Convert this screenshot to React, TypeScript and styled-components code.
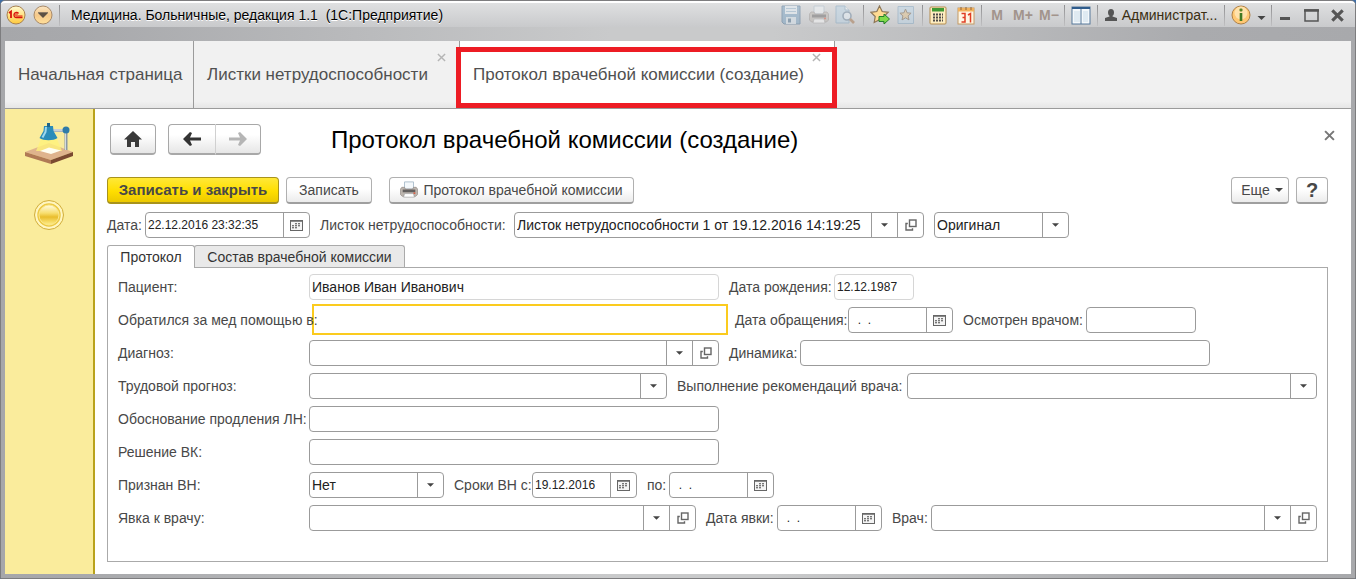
import React from "react";
import styled, { createGlobalStyle, css } from "styled-components";

const ink = "#484848";
const line = "#9b9b9b";

const GlobalStyle = createGlobalStyle`
  *, *::before, *::after { box-sizing: border-box; }
  body {
    margin: 0;
    background: #3f6ea5;
    color: ${ink};
    font-family: "Liberation Sans", Arial, sans-serif;
    font-size: 14px;
    line-height: 16px;
  }
  button, input, select { font: inherit; color: inherit; margin: 0; }
  button { cursor: pointer; }
  svg { display: block; flex: none; }
`;

/* ---------- window frame ---------- */

const Window = styled.div`
  display: flex;
  flex-direction: column;
  min-height: 100vh;
  padding: 0 4px 4px;
  border: 1px solid #7d7d7f;
  border-radius: 5px 5px 0 0;
  background: linear-gradient(90deg, #a6a7aa 0, #a8a9ac 6%, #c9cacb 45%, #c9cacb 57%, #aaabae 88%, #a8a9ac 100%);
`;

const TitleBar = styled.header`
  display: flex;
  align-items: center;
  height: 26px;
  margin: 0 -4px;
  padding: 0 5px 0 5px;
  border-radius: 4px 4px 0 0;
  border-top: 2px solid #fff;
  background: linear-gradient(#dfe0e1, #c9cacc);
  color: #000;
`;

const Separator = styled.span`
  width: 1px;
  height: 21px;
  margin: 0 6px;
  background: linear-gradient(#8f8f91, #c0c0c2);
  flex: none;
`;

const LeadSeparator = styled(Separator)`
  margin: 0;
`;

const Gap = styled.span<{ $w?: number }>`
  width: ${(p) => p.$w ?? 3}px;
  flex: none;
`;

const AppTitle = styled.h1`
  flex: 1;
  margin: 0 0 0 5px;
  font-size: 14px;
  font-weight: 400;
  line-height: 16px;
  white-space: nowrap;
  text-shadow: 0 1px 0 #fff;
`;

const BarButton = styled.button<{ $w?: number; $faded?: boolean }>`
  display: flex;
  align-items: center;
  justify-content: center;
  gap: 5px;
  width: ${(p) => (p.$w ? `${p.$w}px` : "auto")};
  height: 22px;
  padding: 0;
  border: 0;
  background: none;
  color: #555;
  white-space: nowrap;
  opacity: ${(p) => (p.$faded ? 0.45 : 1)};
`;

const MemoryButton = styled(BarButton)`
  color: #a2948c;
  font-weight: 700;
`;

const UserButton = styled(BarButton)`
  color: #3b2f12;
`;

const LowCaret = styled.span`
  padding-top: 6px;
`;

const Group = styled.div`
  display: flex;
  align-items: center;
`;

/* ---------- open pages ---------- */

const PageTabs = styled.nav`
  display: flex;
  height: 68px;
  margin-top: 14px;
  border-bottom: 1px solid #9b9b9b;
  background: linear-gradient(#f1f1f1 90%, #e6e6e6);
`;

const PageTab = styled.div<{ $w: number; $active?: boolean }>`
  position: relative;
  display: flex;
  align-items: center;
  width: ${(p) => p.$w}px;
  padding-left: 13px;
  border-right: 1px solid #9b9b9b;
  ${(p) => p.$active && css`background: #fff;`}
`;

const PageLink = styled.a`
  color: #505050;
  font-size: 17px;
  line-height: 20px;
  text-decoration: none;
  white-space: nowrap;
`;

const TabClose = styled.button`
  position: absolute;
  top: 12px;
  right: 13px;
  padding: 0;
  border: 0;
  background: none;
  color: #b5b5b5;
`;

const Highlight = styled.span`
  position: absolute;
  inset: 6px -3px 0 -4px;
  border: 5px solid #ed1c24;
  pointer-events: none;
`;

const Body = styled.div`
  display: flex;
  flex: 1;
  background: #fff;
`;

const Sections = styled.aside`
  display: flex;
  flex-direction: column;
  align-items: center;
  gap: 34px;
  width: 90px;
  padding-top: 14px;
  border-right: 2px solid #b9a21c;
  background: #faec9c;
  flex: none;
`;

const SectionButton = styled.button`
  padding: 0;
  border: 0;
  background: none;
`;

/* ---------- form ---------- */

const Form = styled.main`
  flex: 1;
  min-width: 0;
  padding: 15px 23px 12px 12px;
`;

const Row = styled.div<{ $gap?: number }>`
  display: flex;
  align-items: center;
  gap: ${(p) => p.$gap ?? 10}px;
`;

const HeadRow = styled(Row)`
  padding: 0 0 0 3px;
`;

const FormTitle = styled.h2`
  flex: 1;
  margin: 0 0 0 58px;
  color: #000;
  font-size: 24px;
  font-weight: 400;
  line-height: 30px;
  white-space: nowrap;
`;

const raised = css`
  border: 1px solid #b0b0b0;
  border-bottom: 2px solid #9f9f9f;
  border-radius: 4px;
  background: linear-gradient(#fff 45%, #ebebeb);
`;

const NavButton = styled.button`
  display: flex;
  align-items: center;
  justify-content: center;
  width: 46px;
  height: 31px;
  padding: 0;
  border: 1px solid #a8a8a8;
  border-bottom-width: 2px;
  border-radius: 4px;
  background: linear-gradient(#fff 35%, #e6e6e6);
`;

const NavPair = styled.div`
  display: flex;
  ${NavButton}:first-child { width: 47px; border-right: 0; border-radius: 4px 0 0 4px; }
  ${NavButton}:last-child { border-left: 1px solid #d0d0d0; border-radius: 0 4px 4px 0; }
`;

const CloseForm = styled.button`
  align-self: flex-start;
  margin: 6px -7px 0 0;
  padding: 0;
  border: 0;
  background: none;
  color: #777;
`;

const Commands = styled(Row)`
  margin-top: 22px;
`;

const Command = styled.button<{ $w: number; $primary?: boolean }>`
  display: flex;
  align-items: center;
  justify-content: center;
  gap: 5px;
  width: ${(p) => p.$w}px;
  height: 27px;
  padding: 0;
  white-space: nowrap;
  ${raised}
  ${(p) => p.$primary && css`
    border-color: #a8931c;
    background: linear-gradient(#ffe838, #ffde00 55%, #ecc900);
    font-size: 15px;
    font-weight: 700;
  `}
`;

const Spacer = styled.span`
  flex: 1;
`;

const HelpButton = styled(Command)`
  font-size: 20px;
  font-weight: 700;
`;

const DocRow = styled(Row)`
  margin-top: 8px;
`;

const Item = styled.div<{ $grow?: boolean }>`
  display: flex;
  align-items: center;
  flex: ${(p) => (p.$grow ? "1" : "none")};
`;

const Label = styled.label<{ $w: number }>`
  position: relative;
  z-index: 1;
  width: ${(p) => p.$w}px;
  flex: none;
  white-space: nowrap;
`;

const Box = styled.div<{ $w?: number; $quiet?: boolean; $focus?: boolean }>`
  display: flex;
  height: 26px;
  ${(p) => (p.$w ? css`width: ${p.$w}px;` : css`flex: 1;`)}
  border: 1px solid ${(p) => (p.$quiet ? "#d6d6d6" : line)};
  border-radius: 4px;
  background: #fff;
  color: #222;
  ${(p) => p.$focus && css`
    height: 31px;
    margin: -3px -3px -2px 3px;
    border: 2px solid #fbcb1e;
    border-radius: 0;
  `}
`;

const Input = styled.input<{ $date?: boolean }>`
  flex: 1;
  min-width: 0;
  padding: 0 2px;
  border: 0;
  outline: 0;
  background: none;
  white-space: pre;
  font-size: ${(p) => (p.$date ? 12 : 14)}px;
`;

const Select = styled.select`
  flex: 1;
  min-width: 0;
  padding: 0 2px;
  border: 0;
  outline: 0;
  background: none;
  appearance: none;
`;

const BoxButton = styled.button`
  display: flex;
  align-items: center;
  justify-content: center;
  width: 26px;
  padding: 0;
  border: 0;
  border-left: 1px solid ${line};
  background: none;
  flex: none;
`;

const FormTabs = styled.div`
  display: flex;
  margin-top: 7px;
`;

const FormTab = styled.button<{ $w: number; $active?: boolean }>`
  width: ${(p) => p.$w}px;
  height: 22px;
  padding: 0;
  border: 1px solid #aaa;
  border-bottom: 0;
  border-radius: 3px 3px 0 0;
  background: #e9e9e9;
  color: #333;
  white-space: nowrap;
  ${(p) => p.$active && css`
    position: relative;
    margin: 0 -1px -1px 0;
    height: 23px;
    background: #fff;
  `}
`;

const Panel = styled.section`
  display: flex;
  flex-direction: column;
  gap: 7px;
  padding: 6px 10px 30px;
  border: 1px solid #aaa;
`;

/* ---------- drawings ---------- */

const Caret = ({ w = 7 }: { w?: number }) => (
  <svg width={w} height="4" viewBox="0 0 8 4"><path d="M0 0h8L4 4z" fill="#444" /></svg>
);

const Cross = ({ size, stroke }: { size: number; stroke: number }) => (
  <svg width={size} height={size} viewBox="0 0 10 10">
    <path d="M1 1l8 8M9 1L1 9" stroke="currentColor" strokeWidth={stroke} />
  </svg>
);

const CalendarGrid = () => (
  <svg width="13" height="11" viewBox="0 0 13 11">
    <rect x="0.5" y="0.5" width="12" height="10" fill="#f4f4f4" stroke="#666" />
    <path d="M1 1.5h11" stroke="#8a8a8a" />
    <path d="M5 3.5h6M2 5.5h9M2 7.5h6" stroke="#777" strokeDasharray="2 1" />
    <path d="M5 4.5h6M2 6.5h9M2 8.5h6" stroke="#c4c4c4" strokeDasharray="2 1" />
  </svg>
);

const OpenGlyph = () => (
  <svg width="12" height="12" viewBox="0 0 12 12" fill="none" stroke="#666" strokeWidth="1.4">
    <rect x="4.500" y="1" width="6.500" height="6.500" />
    <path d="M2.800 4.500H1V11h6.500V9.200" />
  </svg>
);

const LogoIcon = () => (
  <svg width="20" height="20" viewBox="0 0 20 20">
    <defs>
      <linearGradient id="logo" x1="0" y1="0" x2="0" y2="1">
        <stop offset="0" stopColor="#fffbd0" /><stop offset="1" stopColor="#ffc93a" />
      </linearGradient>
    </defs>
    <circle cx="10" cy="10" r="9" fill="url(#logo)" stroke="#a9824f" />
    <path d="M3 8l2-1.500V13" fill="none" stroke="#d9150c" strokeWidth="1.800" />
    <path d="M12.500 8.500a2.500 2.500 0 1 0-2 4h6" fill="none" stroke="#d9150c" strokeWidth="1.400" />
    <path d="M11.500 9.500a1 1 0 1 0-.8 1.500h5.800" fill="none" stroke="#d9150c" strokeWidth="1" />
  </svg>
);

const MenuIcon = () => (
  <svg width="20" height="20" viewBox="0 0 20 20">
    <defs>
      <linearGradient id="menu" x1="0" y1="0" x2="0" y2="1">
        <stop offset="0" stopColor="#fbe6c4" /><stop offset=".5" stopColor="#f5c98a" /><stop offset="1" stopColor="#ffdf9a" />
      </linearGradient>
    </defs>
    <circle cx="10" cy="10" r="9" fill="url(#menu)" stroke="#a98a68" />
    <path d="M5 8h10l-5 5z" fill="#5d5144" />
    <path d="M5 7.500h10" stroke="#8b7a66" />
  </svg>
);

const SaveIcon = () => (
  <svg width="20" height="20" viewBox="0 0 20 20">
    <path d="M1 1h18v18H3l-2-2z" fill="#6f9cc0" stroke="#40698e" />
    <path d="M4 1h12v8H4z" fill="#e7f2fa" /><path d="M5 3.500h10M5 6.500h10" stroke="#90b4ce" />
    <path d="M5 12h10v7H5z" fill="#d6e5f0" /><path d="M7 13.500h3v4H7z" fill="#3d6485" />
  </svg>
);

const PrinterIcon = ({ size = 20 }: { size?: number }) => (
  <svg width={size} height={size} viewBox="0 0 20 20">
    <path d="M5 1h10v8H5z" fill="#f4f8fb" stroke="#a9bccb" />
    <path d="M2 7h3l1 2h8l1-2h3l1.500 2v6l-2 2h-15l-2-2V9z" fill="#bcb5ae" stroke="#8a837e" strokeWidth=".7" />
    <path d="M3 9.500h14v3H3z" fill="#625f5e" />
    <path d="M5 14h10l1 4H4z" fill="#fff" stroke="#9b9b9b" strokeWidth=".7" />
    <path d="M15 13.500h2" stroke="#e44b2d" strokeWidth="1.500" />
  </svg>
);

const PreviewIcon = () => (
  <svg width="20" height="20" viewBox="0 0 20 20">
    <path d="M1 1h9l4 4v13H1z" fill="#b9d4e8" stroke="#7ba1bf" />
    <path d="M10 1v4h4" fill="#fff" stroke="#7ba1bf" />
    <circle cx="12" cy="11" r="4" fill="#e7f3fc" stroke="#64809a" strokeWidth="1.600" />
    <path d="M15 14l4 4" stroke="#a06a3c" strokeWidth="2.600" />
  </svg>
);

const StarAddIcon = () => (
  <svg width="20" height="20" viewBox="0 0 20 20">
    <path d="M9.500 1l2.700 5.500 6 .8-4.400 4.200 1 6-5.300-2.800-5.300 2.800 1-6L.8 7.300l6-.8z" fill="#ffdb92" stroke="#8d7657" strokeWidth="1.200" />
    <path d="M9 11.500h5V9l5.500 5-5.500 5v-2.500H9z" fill="#7fda4a" stroke="#26802c" />
  </svg>
);

const StarPageIcon = () => (
  <svg width="18" height="20" viewBox="0 0 18 20">
    <path d="M1 1.500h15.500v17H1z" fill="#b9d4e8" stroke="#7ba1bf" />
    <path d="M8.500 4l1.600 3.800 4 .4-3 2.700.9 4-3.500-2.100L5 14.900l.9-4-3-2.700 4-.4z" fill="#e2bd80" stroke="#68543e" />
  </svg>
);

const CalcIcon = () => (
  <svg width="18" height="19" viewBox="0 0 18 19">
    <rect x="1" y="1" width="16" height="17" rx="1" fill="#fdecc0" stroke="#b48c4c" />
    <path d="M3 2h12v3.500H3z" fill="#3f9a33" />
    <path d="M4 8.500h10M4 11.500h10M4 14.500h10" stroke="#4d4b48" strokeWidth="2" strokeDasharray="2 1" />
  </svg>
);

const DateIcon = () => (
  <svg width="18" height="19" viewBox="0 0 18 19">
    <rect x="1" y="2" width="16" height="16" fill="#fff6e4" stroke="#c39a64" />
    <path d="M1 2h16v3.500H1z" fill="#f2b25d" /><path d="M4 1v3M9 1v3M14 1v3" stroke="#8e633a" />
    <path d="M4.500 7.500H8V16H4.500M5.500 11.500H8M11 9l2.500-1.500V16.500" fill="none" stroke="#e03c22" strokeWidth="1.500" />
  </svg>
);

const SplitIcon = () => (
  <svg width="20" height="19" viewBox="0 0 20 19">
    <rect x="1" y="1" width="18" height="17" fill="#f4f8fb" stroke="#56799a" />
    <path d="M1 2h18" stroke="#2f5c8c" strokeWidth="2" /><path d="M10 3v15" stroke="#56799a" />
    <path d="M3 5h6v11H3zM12 5h5v11h-5z" fill="#dfeaf2" />
  </svg>
);

const UserIcon = () => (
  <svg width="12" height="12" viewBox="0 0 12 12" fill="#555">
    <ellipse cx="6" cy="3.500" rx="3" ry="3.500" /><path d="M4.500 5h3v2.500L12 9v3H0V9l4.500-1.500z" />
  </svg>
);

const InfoIcon = () => (
  <svg width="20" height="20" viewBox="0 0 20 20">
    <circle cx="10" cy="10" r="9" fill="#ffc873" stroke="#ae8047" />
    <circle cx="10" cy="8" r="6.500" fill="#ffe2ac" />
    <rect x="8.500" y="3.500" width="3" height="3" rx="1" fill="#5d8426" />
    <path d="M10 8v8" stroke="#3f7a24" strokeWidth="2.600" />
  </svg>
);

const MinimizeIcon = () => (
  <svg width="10" height="10" viewBox="0 0 10 10"><path d="M0 8.500h10" stroke="#555" strokeWidth="3" /></svg>
);

const MaximizeIcon = () => (
  <svg width="15" height="13" viewBox="0 0 15 13">
    <path d="M1 1h13v11H1z" fill="none" stroke="#555" strokeWidth="1.500" />
    <path d="M0 1.500h15" stroke="#555" strokeWidth="2.500" />
  </svg>
);

const LampIcon = () => (
  <svg width="50" height="42" viewBox="0 0 50 42">
    <path d="M1 29l24-9 24 9-22 8z" fill="#dfb48d" />
    <path d="M1 29l26 8v4L1 33z" fill="#b07a55" /><path d="M27 37l22-8v4l-22 8z" fill="#7b4a31" />
    <path d="M42 8v19" stroke="#8c9aa6" strokeWidth="3" /><path d="M41.500 8v19" stroke="#d5dbe0" />
    <path d="M27 7.500h15" stroke="#a9b4bd" strokeWidth="3" /><path d="M27 7h15" stroke="#e8ecef" />
    <path d="M17 16h16l5 12H12z" fill="#fff27a" opacity=".8" />
    <path d="M16 28l9-3.500 12 3L27 31z" fill="#fffef0" />
    <path d="M20 3h9l.5 5 4 7c-4 3-14 3-18 0l4-7z" fill="#2b8cb9" />
    <path d="M22 4l-.5 5-3 5.500" stroke="#9fd8ee" strokeWidth="2" fill="none" />
    <path d="M24.500 0v4" stroke="#1e668c" strokeWidth="3" />
    <circle cx="42" cy="7" r="3.500" fill="#2f7ba8" />
  </svg>
);

const CoinIcon = () => (
  <svg width="32" height="32" viewBox="0 0 32 32">
    <defs>
      <linearGradient id="coin" x1="0" y1="0" x2="0" y2="1">
        <stop offset="0" stopColor="#fffbe0" /><stop offset=".4" stopColor="#f8df70" />
        <stop offset=".6" stopColor="#e9bd2c" /><stop offset="1" stopColor="#fff08e" />
      </linearGradient>
    </defs>
    <circle cx="16" cy="16" r="14.500" fill="#fdf3b4" stroke="#d2ad3c" />
    <circle cx="16" cy="16" r="12.500" fill="#ecc944" stroke="#fff6c4" strokeWidth="1.500" />
    <circle cx="16" cy="16" r="10" fill="url(#coin)" stroke="#fbe78a" />
  </svg>
);

const HomeIcon = () => (
  <svg width="18" height="16" viewBox="0 0 18 16">
    <path d="M9 0l9 8.500h-3V16h-4v-5H7v5H3V8.500H0z" fill="#3a3a3a" />
  </svg>
);

const ArrowIcon = ({ forward }: { forward?: boolean }) => (
  <svg width="18" height="14" viewBox="0 0 18 14">
    <path
      d={forward ? "M0 5.500h11L9 1l2-1 7 7-7 7-2-1 2-4.500H0z" : "M18 5.500H7L9 1 7 0 0 7l7 7 2-1-2-4.500h11z"}
      fill={forward ? "#b5b5b5" : "#333"}
    />
  </svg>
);

/* ---------- fields ---------- */

type FieldProps = {
  id: string;
  label?: string;
  labelWidth?: number;
  width?: number;
  value?: string;
  kind?: "text" | "date" | "select" | "ref";
  quiet?: boolean;
  focus?: boolean;
};

const Field = ({ id, label, labelWidth = 0, width, value = "", kind = "text", quiet, focus }: FieldProps) => (
  <Item $grow={!width}>
    {label && <Label htmlFor={id} $w={labelWidth}>{label}</Label>}
    <Box $w={width} $quiet={quiet} $focus={focus}>
      {kind === "select" ? (
        <Select id={id} defaultValue={value} aria-label={label ? undefined : "Вид листка"}>
          <option>{value}</option>
        </Select>
      ) : (
        <Input id={id} defaultValue={value} readOnly={quiet} $date={/^[\d\s.:]+$/.test(value)} />
      )}
      {kind === "date" && <BoxButton aria-label="Выбрать дату"><CalendarGrid /></BoxButton>}
      {(kind === "select" || kind === "ref") && <BoxButton aria-label="Выбрать"><Caret /></BoxButton>}
      {kind === "ref" && <BoxButton aria-label="Открыть"><OpenGlyph /></BoxButton>}
    </Box>
  </Item>
);

const emptyDate = "  .  .";

export default function App() {
  return (
    <>
      <GlobalStyle />
      <Window>
        <TitleBar>
          <BarButton $w={20} aria-label="Главное меню"><LogoIcon /></BarButton>
          <Gap $w={7} />
          <BarButton $w={20} aria-label="Меню"><MenuIcon /></BarButton>
          <Separator />
          <AppTitle>Медицина. Больничные, редакция 1.1&nbsp; (1С:Предприятие)</AppTitle>
          <Group>
            <BarButton $w={28} $faded aria-label="Сохранить"><SaveIcon /></BarButton>
            <BarButton $w={28} $faded aria-label="Печать"><PrinterIcon /></BarButton>
            <BarButton $w={24} $faded aria-label="Просмотр"><PreviewIcon /></BarButton>
          </Group>
          <Separator />
          <BarButton $w={20} aria-label="В избранное"><StarAddIcon /></BarButton>
          <BarButton $w={32} $faded aria-label="Избранное"><StarPageIcon /></BarButton>
          <LeadSeparator />
          <Gap $w={6} />
          <BarButton $w={18} aria-label="Калькулятор"><CalcIcon /></BarButton>
          <Gap $w={9} />
          <BarButton $w={19} aria-label="Календарь"><DateIcon /></BarButton>
          <Separator />
          <MemoryButton $w={18}>M</MemoryButton>
          <MemoryButton $w={34}>M+</MemoryButton>
          <MemoryButton $w={18}>M−</MemoryButton>
          <Separator />
          <BarButton $w={20} aria-label="Панели"><SplitIcon /></BarButton>
          <Separator />
          <UserButton $w={114}><UserIcon />Администрат...</UserButton>
          <Separator />
          <BarButton $w={20} aria-label="Информация"><InfoIcon /></BarButton>
          <BarButton $w={20} aria-label="Справка"><LowCaret><Caret w={9} /></LowCaret></BarButton>
          <LeadSeparator />
          <BarButton $w={26} aria-label="Свернуть"><MinimizeIcon /></BarButton>
          <BarButton $w={26} aria-label="Развернуть"><MaximizeIcon /></BarButton>
          <BarButton $w={26} aria-label="Закрыть"><Cross size={13} stroke={2.4} /></BarButton>
        </TitleBar>

        <PageTabs>
          <PageTab $w={189}><PageLink href="#home">Начальная страница</PageLink></PageTab>
          <PageTab $w={266}>
            <PageLink href="#sheets">Листки нетрудоспособности</PageLink>
            <TabClose aria-label="Закрыть вкладку"><Cross size={9} stroke={1.6} /></TabClose>
          </PageTab>
          <PageTab $w={375} $active>
            <PageLink href="#protocol">Протокол врачебной комиссии (создание)</PageLink>
            <TabClose aria-label="Закрыть вкладку"><Cross size={9} stroke={1.6} /></TabClose>
            <Highlight />
          </PageTab>
        </PageTabs>

        <Body>
          <Sections>
            <SectionButton aria-label="Рабочий стол"><LampIcon /></SectionButton>
            <SectionButton aria-label="Раздел"><CoinIcon /></SectionButton>
          </Sections>
          <Form>
            <HeadRow $gap={12}>
              <NavButton aria-label="Домой"><HomeIcon /></NavButton>
              <NavPair>
                <NavButton aria-label="Назад"><ArrowIcon /></NavButton>
                <NavButton aria-label="Вперёд"><ArrowIcon forward /></NavButton>
              </NavPair>
              <FormTitle>Протокол врачебной комиссии (создание)</FormTitle>
              <CloseForm aria-label="Закрыть форму"><Cross size={11} stroke={1.8} /></CloseForm>
            </HeadRow>

            <Commands $gap={7}>
              <Command $w={172} $primary>Записать и закрыть</Command>
              <Command $w={86}>Записать</Command>
              <Gap />
              <Command $w={245}><PrinterIcon size={18} />Протокол врачебной комиссии</Command>
              <Spacer />
              <Command $w={58}>&nbsp;Еще <Caret w={8} /></Command>
              <HelpButton $w={32}>?</HelpButton>
            </Commands>

            <DocRow>
              <Field id="date" label="Дата:" labelWidth={38} width={165} kind="date" value="22.12.2016 23:32:35" />
              <Field id="sheet" label="Листок нетрудоспособности:" labelWidth={194} width={410} kind="ref" value="Листок нетрудоспособности 1 от 19.12.2016 14:19:25" />
              <Field id="copy" width={135} kind="select" value="Оригинал" />
            </DocRow>

            <FormTabs role="tablist">
              <FormTab $w={88} $active role="tab" aria-selected="true">Протокол</FormTab>
              <FormTab $w={211} role="tab" aria-selected="false">Состав врачебной комиссии</FormTab>
            </FormTabs>
            <Panel>
              <Row>
                <Field id="patient" label="Пациент:" labelWidth={191} width={410} value="Иванов Иван Иванович" quiet />
                <Field id="birth" label="Дата рождения:" labelWidth={105} width={80} value="12.12.1987" quiet />
              </Row>
              <Row>
                <Field id="place" label="Обратился за мед помощью в:" labelWidth={191} width={416} focus />
                <Field id="visit" label="Дата обращения:" labelWidth={113} width={105} kind="date" value={emptyDate} />
                <Field id="seen" label="Осмотрен врачом:" labelWidth={123} width={110} />
              </Row>
              <Row>
                <Field id="diagnosis" label="Диагноз:" labelWidth={191} width={410} kind="ref" />
                <Field id="dynamics" label="Динамика:" labelWidth={71} width={410} />
              </Row>
              <Row>
                <Field id="forecast" label="Трудовой прогноз:" labelWidth={191} width={358} kind="select" />
                <Field id="advice" label="Выполнение рекомендаций врача:" labelWidth={230} kind="select" />
              </Row>
              <Row>
                <Field id="reason" label="Обоснование продления ЛН:" labelWidth={191} width={410} />
              </Row>
              <Row>
                <Field id="decision" label="Решение ВК:" labelWidth={191} width={410} />
              </Row>
              <Row>
                <Field id="disabled" label="Признан ВН:" labelWidth={191} width={135} kind="select" value="Нет" />
                <Field id="from" label="Сроки ВН с:" labelWidth={78} width={105} kind="date" value="19.12.2016" />
                <Field id="to" label="по:" labelWidth={22} width={105} kind="date" value={emptyDate} />
              </Row>
              <Row>
                <Field id="next" label="Явка к врачу:" labelWidth={191} width={387} kind="ref" />
                <Field id="nextdate" label="Дата явки:" labelWidth={71} width={105} kind="date" value={emptyDate} />
                <Field id="doctor" label="Врач:" labelWidth={39} kind="ref" />
              </Row>
            </Panel>
          </Form>
        </Body>
      </Window>
    </>
  );
}
